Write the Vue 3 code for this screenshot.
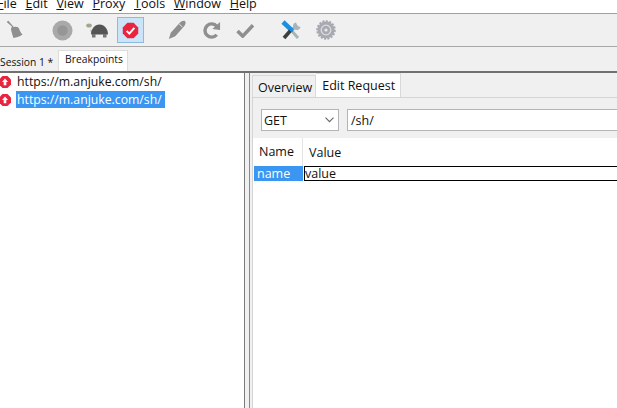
<script setup>
const menus = [
  { key: 'F', rest: 'ile' },
  { key: 'E', rest: 'dit' },
  { key: 'V', rest: 'iew' },
  { key: 'P', rest: 'roxy' },
  { key: 'T', rest: 'ools' },
  { key: 'W', rest: 'indow' },
  { key: 'H', rest: 'elp' }
]
</script>

<template>
  <div class="app">
    <nav class="menu">
      <span v-for="m in menus" :key="m.key" class="menu-item"><u>{{ m.key }}</u>{{ m.rest }}</span>
    </nav>

    <div class="toolbar">
      <svg class="ic broom" width="20" height="20" viewBox="0 0 22 24">
        <path d="M1 2.500 3 1l6.500 7.500c2.500-.8 4.500-.4 6 1 1 2 2 5.500 4.500 8-3.500 2.500-8 4-11 4-.8-3-1.800-6-2.500-8.500-.5-2.200-.2-3.500 1-4.800z" fill="#8f8f8f"/>
      </svg>
      <svg class="ic rec" width="21" height="21" viewBox="0 0 22 22">
        <circle cx="11" cy="11" r="10.500" fill="#a9a9a9"/>
        <circle cx="11" cy="11" r="5.500" fill="#969696"/>
      </svg>
      <svg class="ic turtle" width="22" height="15" viewBox="0 0 22 15">
        <ellipse cx="3" cy="2.500" rx="2.800" ry="2" fill="#a6a68e"/>
        <path d="M4 6l3 3-2 1z" fill="#bbb"/>
        <path d="M5 11.500C5 6 8.500 1.500 13.500 1.500S22 6 22 11.500z" fill="#555"/>
        <rect x="6" y="11" width="3.500" height="3.500" fill="#777"/>
        <rect x="17" y="11" width="3.500" height="3.500" fill="#777"/>
      </svg>
      <div class="active">
        <svg width="17" height="17" viewBox="0 0 22 22">
          <polygon points="7,1 15,1 21,7 21,15 15,21 7,21 1,15 1,7" fill="#e8243f"/>
          <path d="M6 11.500 9.500 15 16 7.500" fill="none" stroke="#fff" stroke-width="2.600"/>
        </svg>
      </div>
      <svg class="ic pen" width="20" height="22" viewBox="0 0 22 24">
        <path d="M1 22 3 15 13 4c1.500-1.800 4-2.800 5.500-2 1.500 1 1 3.500-.5 5.500L8 19z" fill="#8f8f8f"/>
        <path d="M12 5l4 4" stroke="#f0f0f0" stroke-width="1"/>
      </svg>
      <svg class="ic redo" width="19" height="19" viewBox="0 0 20 20">
        <path d="M15.500 14.500a7 7 0 1 1 0-9" fill="none" stroke="#8f8f8f" stroke-width="3.600"/>
        <polygon points="19,1 19,9.500 11,8.500" fill="#8f8f8f"/>
      </svg>
      <svg class="ic check" width="19" height="15" viewBox="0 0 20 16">
        <path d="M1.500 8.500 7 14 18 2.500" fill="none" stroke="#8f8f8f" stroke-width="3.800"/>
      </svg>
      <svg class="ic tools" width="22" height="20" viewBox="0 0 22 20">
        <path d="M10 10 17 18" stroke="#a9b4b8" stroke-width="3"/>
        <path d="M10 11 16 5" stroke="#a9b4b8" stroke-width="3"/>
        <path d="M15 2.500A3.800 3.800 0 1 0 19.500 7L16.500 6z" fill="#a9b4b8"/>
        <path d="M2 2 11 10.500" stroke="#1d8fe0" stroke-width="4.500"/>
        <path d="M10 10 3 18" stroke="#3a3f42" stroke-width="3.600"/>
        <path d="M9 8.500 12 11" stroke="#1d8fe0" stroke-width="3"/>
      </svg>
      <svg class="ic gear" width="20" height="20" viewBox="0 0 20 20">
        <circle cx="10" cy="10" r="8.500" fill="#a9a9b2" stroke="#a9a9b2" stroke-width="2.600" stroke-dasharray="2 1.300"/>
        <circle cx="10" cy="10" r="4.800" fill="none" stroke="#dcdce0" stroke-width="1.300"/>
        <circle cx="10" cy="10" r="1.600" fill="#e8e8ea"/>
      </svg>
    </div>

    <div class="session-tabs">
      <span class="stab">Session 1 *</span>
      <span class="stab on">Breakpoints</span>
    </div>

    <div class="main">
      <section class="left">
        <div class="row">
          <svg class="bp" width="12" height="12" viewBox="0 0 12 12">
            <polygon points="3.500,0 8.500,0 12,3.500 12,8.500 8.500,12 3.500,12 0,8.500 0,3.500" fill="#e8243f"/>
            <path d="M6 2.500 9 6H7.300v3.200H4.700V6H3z" fill="#fff"/>
          </svg>
          <span class="url">https://m.anjuke.com/sh/</span>
        </div>
        <div class="row">
          <svg class="bp" width="12" height="12" viewBox="0 0 12 12">
            <polygon points="3.500,0 8.500,0 12,3.500 12,8.500 8.500,12 3.500,12 0,8.500 0,3.500" fill="#e8243f"/>
            <path d="M6 2.500 9 6H7.300v3.200H4.700V6H3z" fill="#fff"/>
          </svg>
          <span class="url sel">https://m.anjuke.com/sh/</span>
        </div>
      </section>

      <section class="right">
        <div class="req-tabs">
          <span class="rtab">Overview</span>
          <span class="rtab on">Edit Request</span>
        </div>
        <div class="panel">
          <div class="form">
            <div class="combo">
              <span>GET</span>
              <svg width="9" height="6" viewBox="0 0 9 6"><path d="M.5.700l4 4 4-4" fill="none" stroke="#666" stroke-width="1.100"/></svg>
            </div>
            <div class="path">/sh/</div>
          </div>
          <div class="grid">
            <div class="head">
              <span class="col-name">Name</span>
              <span class="col-value">Value</span>
            </div>
            <div class="cells">
              <span class="cell-name">name</span>
              <span class="cell-value">value</span>
            </div>
          </div>
        </div>
      </section>
    </div>
  </div>
</template>

<style scoped>
.app {
  width: 617px;
  height: 408px;
  overflow: hidden;
  display: flex;
  flex-direction: column;
  background: #f0f0f0;
  font-family: "Open Sans", "Noto Sans", sans-serif;
  font-size: 12.5px;
  color: #111;
}
.menu {
  height: 13px;
  flex: none;
  display: flex;
  gap: 8.7px;
  margin-left: -3px;
  background: #fff;
  border-bottom: 1px solid #a0a0a0;
  overflow: hidden;
  align-items: flex-start;
}
.menu-item { line-height: 18px; margin-top: -5px; }
.toolbar {
  height: 32px;
  flex: none;
  display: flex;
  align-items: center;
  background: #f0f0f0;
  border-bottom: 1px solid #a8a8a8;
}
.ic { flex: none; }
.broom { margin-left: 5px; }
.rec { margin-left: 27px; }
.turtle { margin-left: 13px; }
.active {
  margin-left: 9px;
  width: 27px;
  height: 26px;
  box-sizing: border-box;
  flex: none;
  display: flex;
  align-items: center;
  justify-content: center;
  background: #cce4f7;
  border: 1px solid #8dbbdf;
}
.pen { margin-left: 24px; }
.redo { margin-left: 14px; }
.check { margin-left: 15px; }
.tools { margin-left: 26px; }
.gear { margin-left: 13px; }
.session-tabs {
  height: 24px;
  flex: none;
  display: flex;
  align-items: flex-end;
}
.stab {
  font-size: 10.3px;
  height: 20px;
  line-height: 23px;
  width: 58px;
  box-sizing: border-box;
  white-space: nowrap;
  background: #f0f0f0;
}
.stab.on {
  width: 70px;
  height: 21px;
  line-height: 17px;
  padding-left: 2px;
  text-align: center;
  background: #fff;
  border: 1px solid #ddd;
  border-bottom: none;
}
.main {
  flex: 1;
  display: flex;
  min-height: 0;
  border-top: 2px solid #707070;
}
.left {
  width: 245px;
  flex: none;
  background: #fff;
  box-sizing: border-box;
  border-right: 1px solid #7a7a7a;
}
.row {
  height: 17px;
  display: flex;
  align-items: center;
  margin-bottom: 1px;
}
.bp { flex: none; margin-left: -1px; }
.url {
  font-size: 12.25px;
  margin-left: 5px;
  padding: 1px 3px 0 1px;
  line-height: 16px;
  white-space: nowrap;
}
.sel { background: #3a96f0; color: #fff; }
.right {
  flex: 1;
  min-width: 0;
  margin-left: 4px;
  border-left: 1px solid #8a8a8a;
  display: flex;
  flex-direction: column;
}
.req-tabs {
  height: 24px;
  flex: none;
  display: flex;
  align-items: flex-end;
  padding-left: 2px;
  background: #f0f0f0;
}
.rtab {
  height: 22px;
  box-sizing: border-box;
  line-height: 23px;
  padding: 0 3px 0 5px;
  background: #f0f0f0;
  border: 1px solid #d9d9d9;
  border-bottom: none;
}
.rtab.on {
  height: 24px;
  line-height: 23px;
  border-left: none;
  padding: 0 5px 0 6px;
  background: #fff;
}
.panel {
  flex: 1;
  display: flex;
  flex-direction: column;
  margin-left: 2px;
  border-top: 1px solid #d4d4d4;
  border-left: 1px solid #d4d4d4;
  background: #fff;
}
.form {
  height: 40px;
  box-sizing: border-box;
  flex: none;
  display: flex;
  align-items: flex-end;
  padding: 0 0 7px 8px;
  gap: 8px;
  background: #f0f0f0;
}
.combo, .path {
  height: 22px;
  box-sizing: border-box;
  border: 1px solid #b4b4b4;
  background: #fff;
  display: flex;
  align-items: center;
  padding: 0 3px;
}
.combo {
  width: 78px;
  flex: none;
  justify-content: space-between;
  padding-right: 4px;
  padding-left: 2px;
}
.path { flex: 1; margin-right: -5px; }
.grid { flex: 1; background: #fff; }
.head {
  height: 28px;
  display: flex;
  align-items: center;
}
.col-name {
  width: 50px;
  height: 100%;
  padding-left: 6px;
  box-sizing: border-box;
  line-height: 28px;
  border-right: 1px solid #e4e4e4;
}
.col-value { padding-left: 6px; }
.cells {
  height: 15px;
  display: flex;
}
.cell-name {
  width: 49px;
  margin-left: 1px;
  background: #3a96f0;
  color: #fff;
  padding-left: 3px;
  box-sizing: border-box;
  line-height: 15px;
}
.cell-value {
  flex: 1;
  margin-left: 1px;
  border: 1px solid #000;
  border-right: none;
  line-height: 13px;
}
</style>
